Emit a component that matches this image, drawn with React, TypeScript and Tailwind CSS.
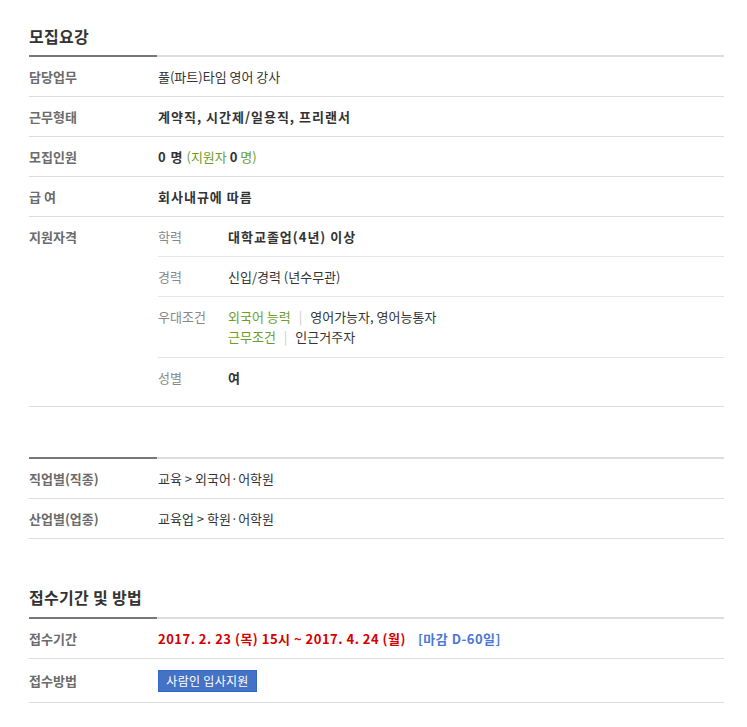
import React from 'react';

const FONT = { fontFamily: '"Noto Sans CJK KR", "Noto Sans", sans-serif' };

// section heading with the two-tone underline bar
function SectionTitle({ title, gap }: { title: string; gap: string }) {
  return (
    <div>
      <h2 className="text-[16px] leading-[24px] font-bold text-[#333] tracking-[0.3px]">{title}</h2>
      <div className={`flex h-[2px] ${gap}`}>
        <div className="w-[128px] bg-[#777]" />
        <div className="flex-1 bg-[#ddd]" />
      </div>
    </div>
  );
}

function Row({ label, children, tall }: { label: string; children: React.ReactNode; tall?: boolean }) {
  return (
    <div className={`flex items-center border-b border-[#ddd] ${tall ? 'h-[44px]' : 'h-[40px]'}`}>
      <div className="w-[129px] shrink-0 font-bold text-[#6b6b6b]">{label}</div>
      <div className="flex-1 text-[#333]">{children}</div>
    </div>
  );
}

function SubRow({ label, children, last }: { label: string; children: React.ReactNode; last?: boolean }) {
  return (
    <div className={`flex items-start py-[10px] ${last ? '' : 'border-b border-[#e5e5e5]'}`}>
      <div className="w-[70px] shrink-0 leading-[19px] text-[#888]">{label}</div>
      <div className="flex-1 leading-[19px] text-[#333]">{children}</div>
    </div>
  );
}

const Sep = () => <span className="mx-[8px] text-[#ccc]">|</span>;

export default function App() {
  return (
    <div className="min-h-[727px] bg-white pl-[29px] pr-[23px] pt-[24px] text-[13px]" style={FONT}>
      {/* 모집요강 */}
      <SectionTitle title="모집요강" gap="mt-[7px]" />
      <Row label="담당업무">풀(파트)타임 영어 강사</Row>
      <Row label="근무형태"><b className="tracking-[1px]">계약직, 시간제/일용직, 프리랜서</b></Row>
      <Row label="모집인원">
        <b className="tracking-[1px]">0 명</b>{' '}
        <span className="text-[#6d9c2d]">(지원자 <b className="text-[#333]">0</b> 명)</span>
      </Row>
      <Row label="급 여"><b className="tracking-[1px]">회사내규에 따름</b></Row>

      <div className="flex border-b border-[#ddd] pb-[9px]">
        <div className="w-[129px] shrink-0 pt-[10px] leading-[19px] font-bold text-[#6b6b6b]">지원자격</div>
        <div className="flex-1">
          <SubRow label="학력"><b className="tracking-[1px]">대학교졸업(4년) 이상</b></SubRow>
          <SubRow label="경력">신입/경력 (년수무관)</SubRow>
          <SubRow label="우대조건">
            <div className="leading-[20px]">
              <span className="text-[#6d9c2d]">외국어 능력</span><Sep />영어가능자, 영어능통자
            </div>
            <div className="leading-[20px]">
              <span className="text-[#6d9c2d]">근무조건</span><Sep />인근거주자
            </div>
          </SubRow>
          <SubRow label="성별" last><b>여</b></SubRow>
        </div>
      </div>

      {/* 직종 / 업종 */}
      <div className="mt-[50px] flex h-[2px]">
        <div className="w-[128px] bg-[#777]" />
        <div className="flex-1 bg-[#ddd]" />
      </div>
      <Row label="직업별(직종)">교육 &gt; 외국어·어학원</Row>
      <Row label="산업별(업종)">교육업 &gt; 학원·어학원</Row>

      {/* 접수기간 및 방법 */}
      <div className="mt-[46px]">
        <SectionTitle title="접수기간 및 방법" gap="mt-[8px]" />
      </div>
      <Row label="접수기간">
        <span className="font-bold tracking-[0.5px] text-[#d40000]">2017. 2. 23 (목) 15시 ~ 2017. 4. 24 (월)</span>
        <span className="ml-[12px] font-bold tracking-[0.5px] text-[#4b78d6]">[마감 D-60일]</span>
      </Row>
      <Row label="접수방법" tall>
        <button className="h-[22px] w-[99px] border border-[#3366cc] bg-[#4472c4] text-[12px] leading-[20px] tracking-[0.3px] text-white">
          사람인 입사지원
        </button>
      </Row>
    </div>
  );
}
